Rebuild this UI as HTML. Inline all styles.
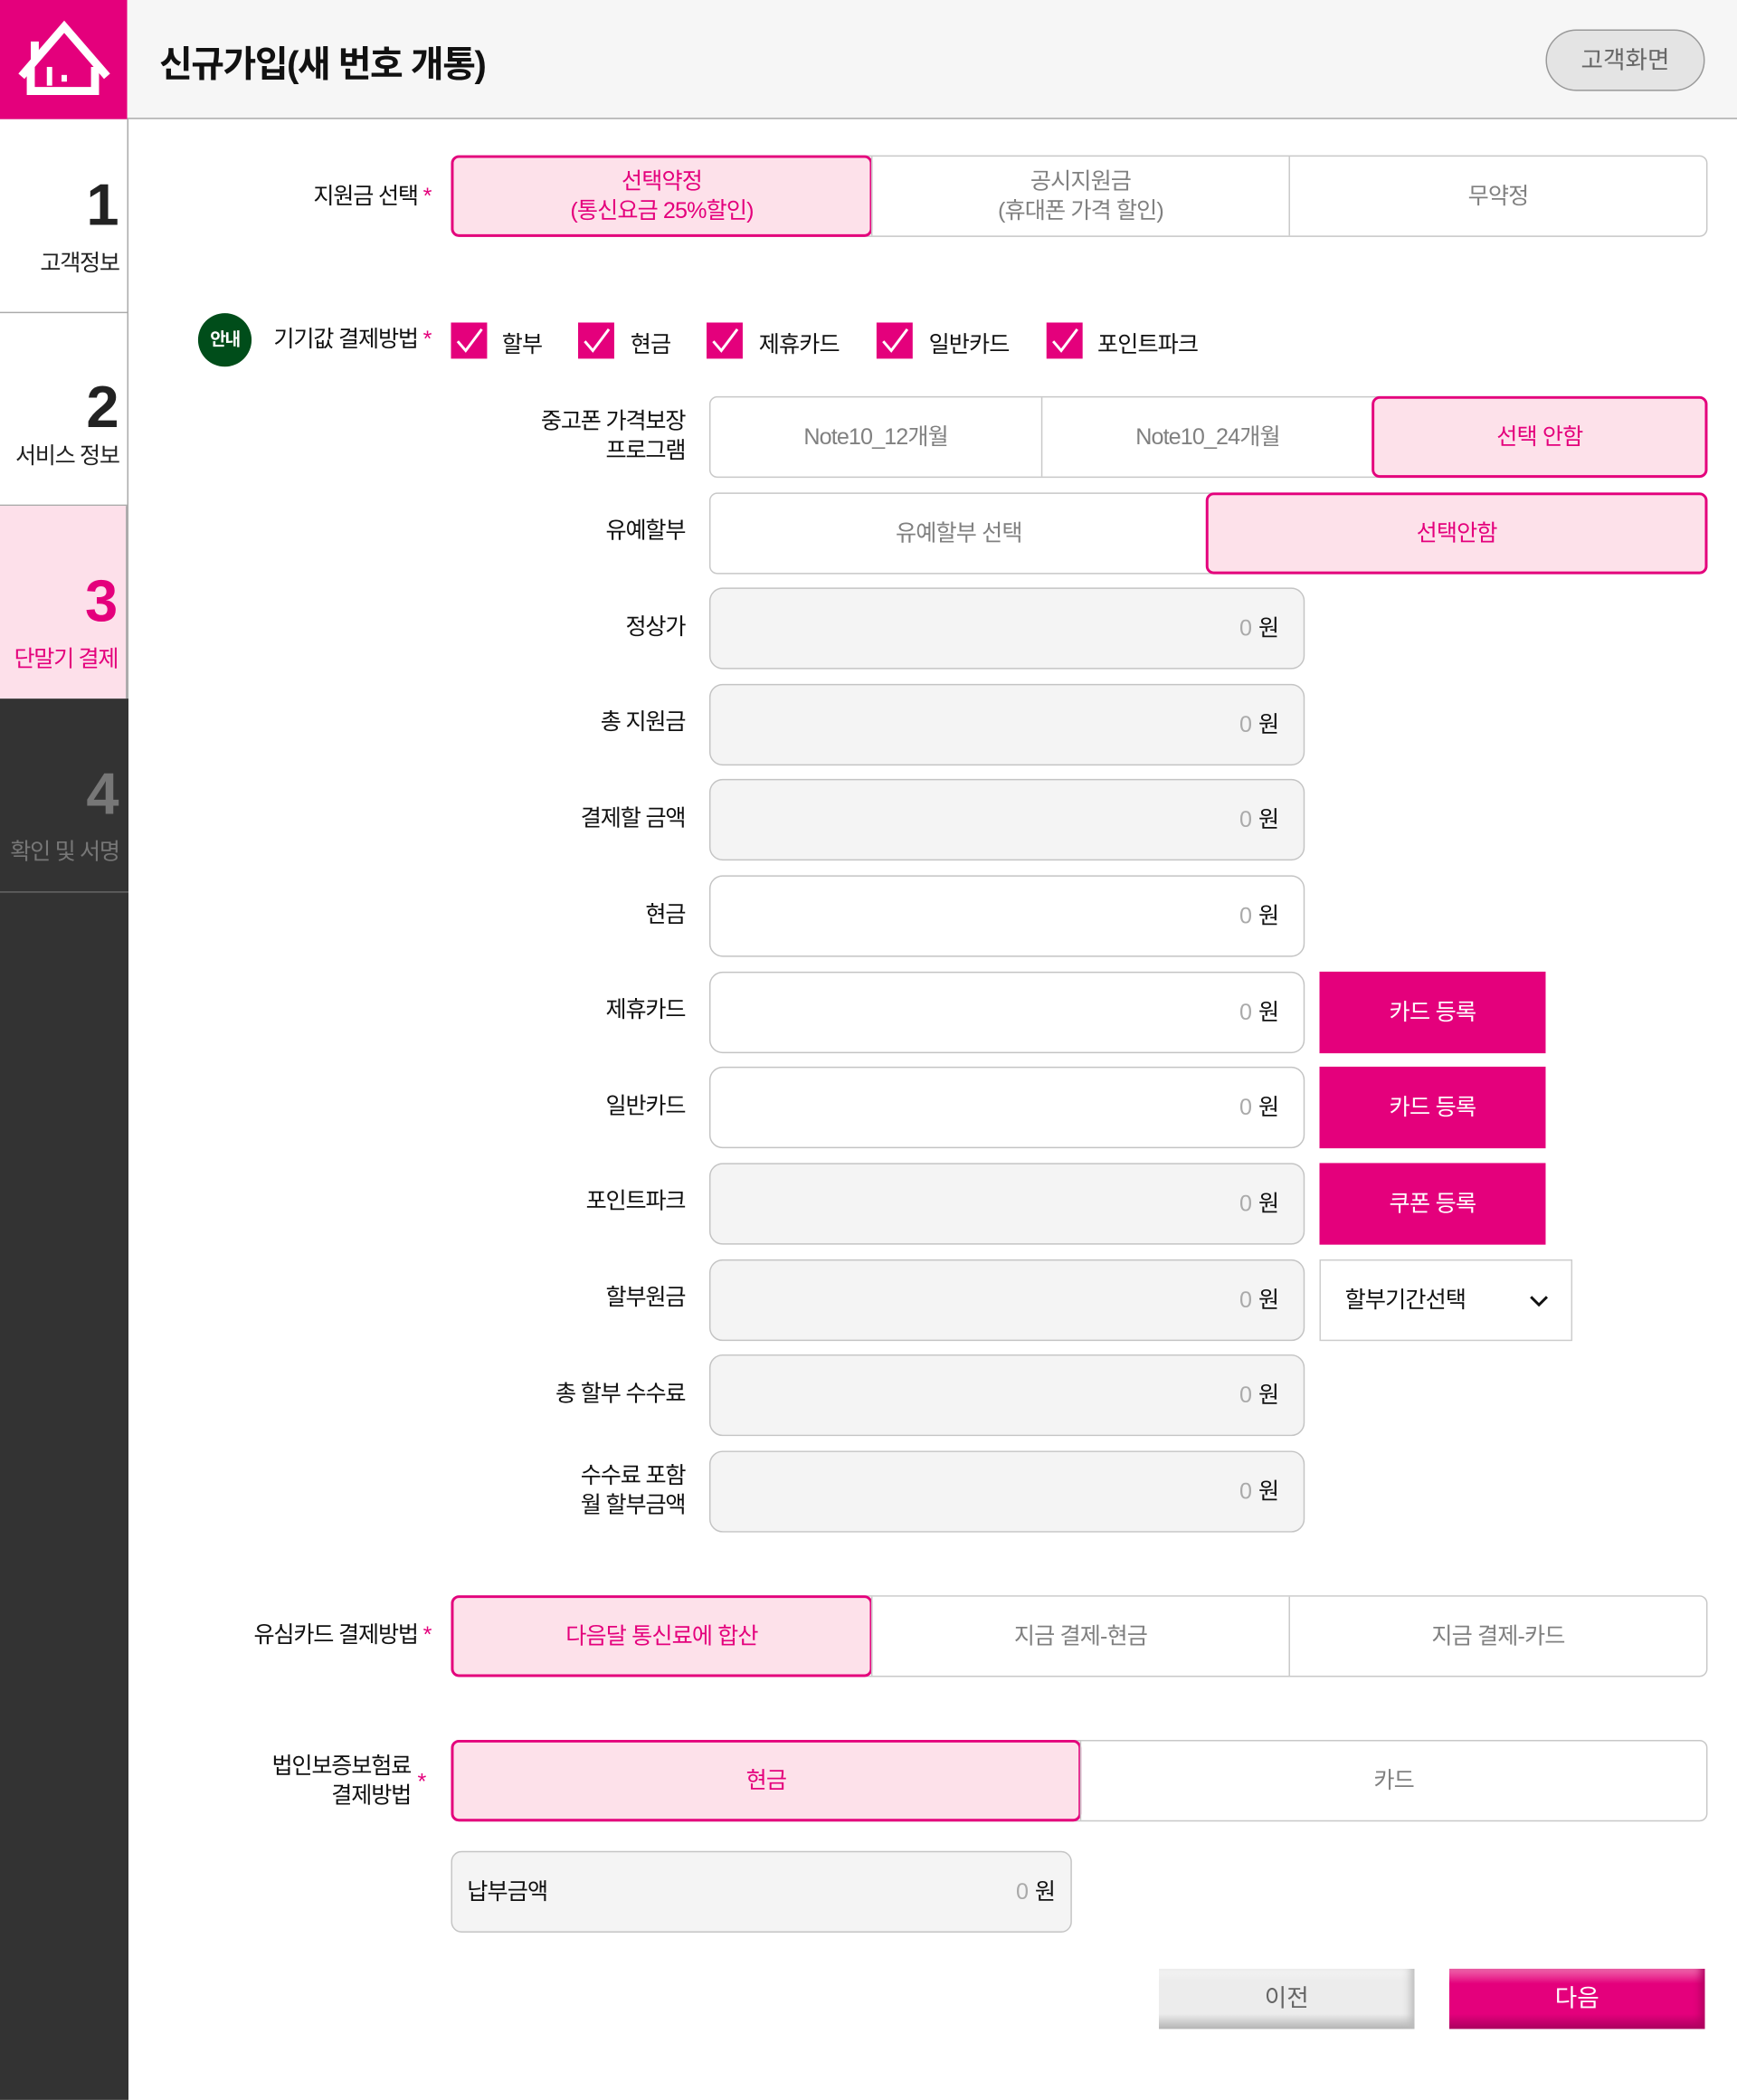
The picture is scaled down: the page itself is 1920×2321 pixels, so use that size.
<!DOCTYPE html>
<html><head><meta charset="utf-8">
<style>
*{margin:0;padding:0;box-sizing:border-box}
html,body{width:1920px;height:2320px;overflow:hidden;background:#fff}
#s{position:absolute;left:0;top:0;width:1298px;height:1569px;transform:scale(1.47920);transform-origin:0 0;font-family:"Liberation Sans","Noto Sans CJK KR",sans-serif;color:#111}
.a{position:absolute}
.lbl{position:absolute;text-align:right;font-size:17px;letter-spacing:-0.8px;line-height:22px}
.star{color:#e4007c;font-size:17px}
.seg{position:absolute;display:flex;height:61px;border:1px solid #c8c8c8;border-radius:6px;background:#fff}
.seg div{flex:1;display:flex;align-items:center;justify-content:center;text-align:center;color:#808080;font-size:17px;letter-spacing:-0.6px;line-height:22px;border-left:1px solid #c8c8c8}
.seg div:first-child{border-left:none}
.seg div.on{background:#fde1ea;border:2px solid #e4007c;border-radius:6px;color:#e4007c;margin:-1px}
.inp{position:absolute;left:530px;width:445px;height:61px;border:1px solid #c4c4c4;border-radius:10px;background:#f4f4f4;font-size:17px;text-align:right;padding-right:18px;line-height:59px}
.inp.w{background:#fff}
.z{color:#aaa}
.pb{position:absolute;left:986px;width:169px;height:61px;background:#e4007c;color:#fff;font-size:17px;text-align:center;line-height:61px;letter-spacing:-0.5px}
.cb{position:absolute;top:241px;width:27px;height:27px;background:#e4007c}
.cbl{position:absolute;top:243px;font-size:17px;letter-spacing:-0.6px}
.side{position:absolute;left:0;width:95px;text-align:right;padding-right:6px}
.num{font-size:44px;font-weight:bold;line-height:50px}
.sl{font-size:17px;letter-spacing:-0.9px;margin-top:12px}
</style></head><body><div id="s">
<div class="a" style="left:0;top:0;width:1298px;height:89px;background:#f6f6f6;border-bottom:1px solid #aaa"></div>
<div class="a" style="left:0;top:0;width:95px;height:89px;background:#e4007c">
<svg width="95" height="89" viewBox="0 0 95 89"><path d="M16 57 L48 20 L80 57" fill="none" stroke="#fff" stroke-width="6" stroke-linejoin="miter"/><path d="M23 50 V68 H71 V50" fill="none" stroke="#fff" stroke-width="6"/><rect x="35" y="50" width="4" height="14" fill="#fff"/><rect x="46" y="56" width="4" height="5" fill="#fff"/><rect x="23" y="31" width="6" height="14" fill="#fff"/></svg>
</div>
<div class="a" style="left:119px;top:26px;font-size:27px;font-weight:bold;letter-spacing:-1px">신규가입(새 번호 개통)</div>
<div class="a" style="left:1155px;top:22px;width:119px;height:46px;border:1px solid #999;border-radius:23px;background:#e4e4e4;color:#666;font-size:18px;text-align:center;line-height:44px">고객화면</div>
<div class="a" style="left:95px;top:89px;width:1px;height:722px;background:#aaa"></div>
<div class="side" style="top:89px;height:145px;border-bottom:1px solid #aaa;padding-top:40px"><div class="num" style="color:#222">1</div><div class="sl" style="margin-top:3px;color:#222">고객정보</div></div>
<div class="side" style="top:234px;height:144px;border-bottom:1px solid #aaa;padding-top:46px"><div class="num" style="color:#222">2</div><div class="sl" style="margin-top:-4px;color:#222">서비스 정보</div></div>
<div class="side" style="top:378px;height:144px;background:#fde0ea;border-right:1px solid #aaa;padding-top:47px"><div class="num" style="color:#e4007c">3</div><div class="sl" style="margin-top:3px;color:#e4007c">단말기 결제</div></div>
<div class="side" style="top:522px;height:1047px;width:96px;background:#333;"></div>
<div class="side" style="top:522px;height:145px;border-bottom:1px solid #666;padding-top:47px;width:96px;padding-right:7px"><div class="num" style="color:#777">4</div><div class="sl" style="margin-top:3px;color:#777">확인 및 서명</div></div>
<div class="lbl" style="right:976px;top:136px">지원금 선택 <span class="star">*</span></div>
<div class="seg" style="left:337px;top:116px;width:939px"><div class="on">선택약정<br>(통신요금 25%할인)</div><div>공시지원금<br>(휴대폰 가격 할인)</div><div>무약정</div></div>
<div class="a" style="left:148px;top:234px;width:40px;height:40px;border-radius:50%;background:#004d1a;color:#fff;font-size:13px;font-weight:bold;text-align:center;line-height:40px;letter-spacing:-1px">안내</div>
<div class="lbl" style="right:976px;top:243px">기기값 결제방법 <span class="star">*</span></div>
<div class="cb" style="left:337px"></div><div class="cbl" style="left:375px">할부</div>
<div class="cb" style="left:432px"></div><div class="cbl" style="left:471px">현금</div>
<div class="cb" style="left:528px"></div><div class="cbl" style="left:567px">제휴카드</div>
<div class="cb" style="left:655px"></div><div class="cbl" style="left:694px">일반카드</div>
<div class="cb" style="left:782px"></div><div class="cbl" style="left:820px">포인트파크</div>
<svg class="a" style="left:0;top:0" width="900" height="300"><g fill="none" stroke="#fff" stroke-width="2"><path d="M342 255 L348 262 L360 246"/><path d="M437 255 L443 262 L455 246"/><path d="M533 255 L539 262 L551 246"/><path d="M660 255 L666 262 L678 246"/><path d="M787 255 L793 262 L805 246"/></g></svg>
<div class="lbl" style="right:786px;top:304px">중고폰 가격보장<br>프로그램</div>
<div class="seg" style="left:530px;top:296px;width:746px"><div>Note10_12개월</div><div>Note10_24개월</div><div class="on">선택 안함</div></div>
<div class="lbl" style="right:786px;top:386px">유예할부</div>
<div class="seg" style="left:530px;top:368px;width:746px"><div>유예할부 선택</div><div class="on">선택안함</div></div>
<div class="lbl" style="right:786px;top:458px">정상가</div><div class="inp" style="top:439px"><span class="z">0</span> 원</div>
<div class="lbl" style="right:786px;top:529px">총 지원금</div><div class="inp" style="top:511px"><span class="z">0</span> 원</div>
<div class="lbl" style="right:786px;top:601px">결제할 금액</div><div class="inp" style="top:582px"><span class="z">0</span> 원</div>
<div class="lbl" style="right:786px;top:673px">현금</div><div class="inp w" style="top:654px"><span class="z">0</span> 원</div>
<div class="lbl" style="right:786px;top:744px">제휴카드</div><div class="inp w" style="top:726px"><span class="z">0</span> 원</div><div class="pb" style="top:726px">카드 등록</div>
<div class="lbl" style="right:786px;top:816px">일반카드</div><div class="inp w" style="top:797px"><span class="z">0</span> 원</div><div class="pb" style="top:797px">카드 등록</div>
<div class="lbl" style="right:786px;top:887px">포인트파크</div><div class="inp" style="top:869px"><span class="z">0</span> 원</div><div class="pb" style="top:869px">쿠폰 등록</div>
<div class="lbl" style="right:786px;top:959px">할부원금</div><div class="inp" style="top:941px"><span class="z">0</span> 원</div>
<div class="a" style="left:986px;top:941px;width:189px;height:61px;border:1px solid #ccc;background:#fff;font-size:17px;line-height:59px;padding-left:18px;letter-spacing:-0.6px">할부기간선택<svg style="position:absolute;left:156px;top:25px" width="14" height="10"><path d="M1 2 L7 8 L13 2" fill="none" stroke="#111" stroke-width="2"/></svg></div>
<div class="lbl" style="right:786px;top:1031px">총 할부 수수료</div><div class="inp" style="top:1012px"><span class="z">0</span> 원</div>
<div class="lbl" style="right:786px;top:1092px">수수료 포함<br>월 할부금액</div><div class="inp" style="top:1084px"><span class="z">0</span> 원</div>
<div class="lbl" style="right:976px;top:1211px">유심카드 결제방법 <span class="star">*</span></div>
<div class="seg" style="left:337px;top:1192px;width:939px"><div class="on">다음달 통신료에 합산</div><div>지금 결제-현금</div><div>지금 결제-카드</div></div>
<div class="lbl" style="right:991px;top:1309px">법인보증보험료<br>결제방법</div><div class="a star" style="left:312px;top:1322px">*</div>
<div class="seg" style="left:337px;top:1300px;width:939px"><div class="on">현금</div><div>카드</div></div>
<div class="a" style="left:337px;top:1383px;width:464px;height:61px;border:1px solid #c4c4c4;border-radius:8px;background:#f4f4f4;font-size:17px;line-height:59px;padding:0 11px;letter-spacing:-0.6px">납부금액<span style="position:absolute;right:11px;letter-spacing:0"><span class="z">0</span> 원</span></div>
<div class="a" style="left:866px;top:1471px;width:191px;height:45px;background:linear-gradient(#f4f4f4 0%,#ececec 20%,#ececec 75%,#b4b4b4 100%);box-shadow:inset -6px 0 6px -3px #bbb;color:#666;font-size:18px;text-align:center;line-height:44px">이전</div>
<div class="a" style="left:1083px;top:1471px;width:191px;height:45px;background:linear-gradient(#f06bae 0%,#e4007c 25%,#e4007c 75%,#ab0060 100%);box-shadow:inset -6px 0 6px -3px #b0005f;color:#fff;font-size:18px;text-align:center;line-height:44px">다음</div>
</div></body></html>
